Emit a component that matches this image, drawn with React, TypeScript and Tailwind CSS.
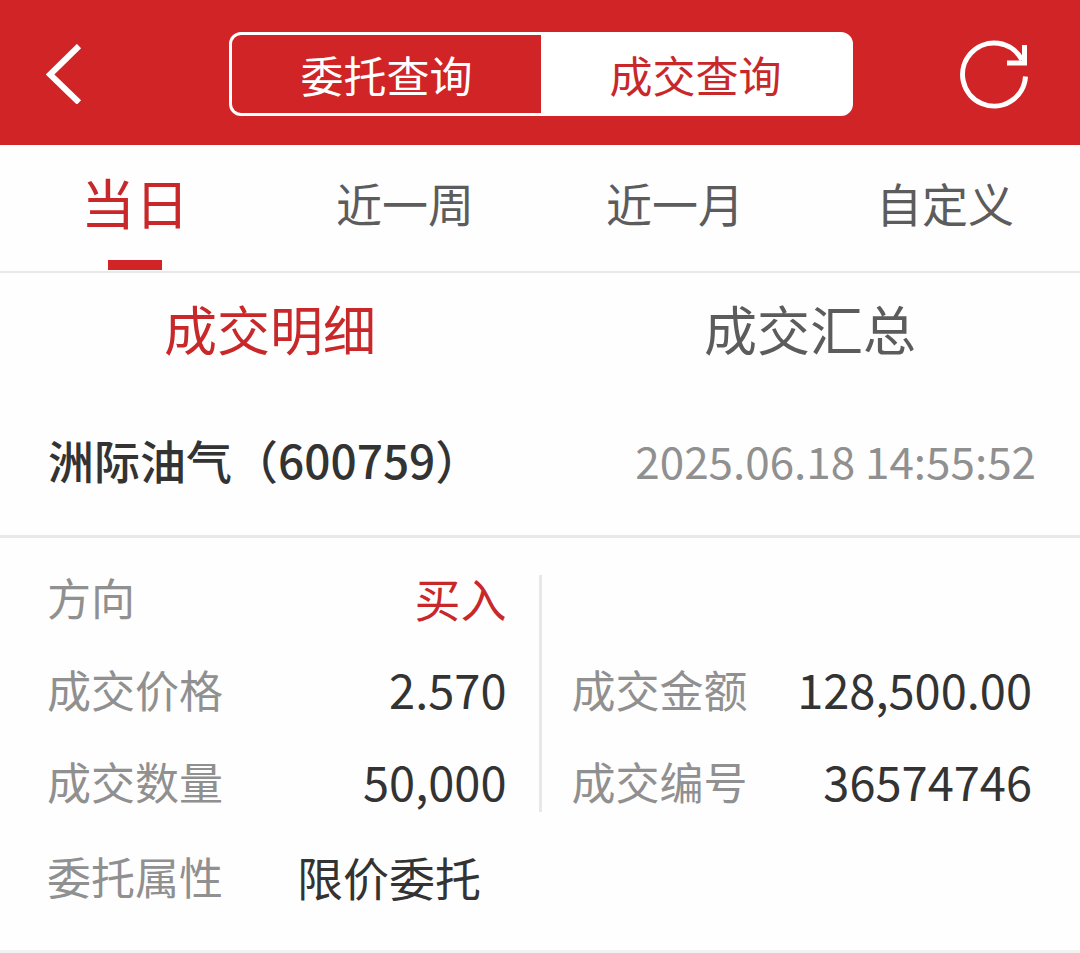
import { useState } from "react";
import clsx from "clsx";

const QUERY_MODES = ["委托查询", "成交查询"];
const RANGES = ["当日", "近一周", "近一月", "自定义"];
const VIEWS = ["成交明细", "成交汇总"];

const deal = {
  name: "洲际油气",
  code: "600759",
  time: "2025.06.18 14:55:52",
  side: "买入",
  price: "2.570",
  volume: "50,000",
  amount: "128,500.00",
  dealNo: "36574746",
  orderType: "限价委托",
};

function BackIcon() {
  return (
    <svg width="36" height="60" viewBox="0 0 36 60" fill="none" aria-hidden="true">
      <path d="M33 2 L4 30.5 L33 58.5" stroke="white" strokeWidth="6" />
    </svg>
  );
}

function RefreshIcon() {
  return (
    <svg width="70" height="70" viewBox="0 0 70 70" fill="none" stroke="white" strokeWidth="5" aria-hidden="true">
      <path d="M65.5 37.5 A31.5 31.5 0 1 1 62 21" />
      <path d="M64.5 6 V24 H47" />
    </svg>
  );
}

type FieldProps = {
  label: string;
  value: string;
  highlight?: boolean;
};

function Field({ label, value, highlight }: FieldProps) {
  return (
    <div className="flex h-11 items-center justify-between">
      <dt className="text-[44px] leading-11 text-[#909090]">{label}</dt>
      <dd
        className={clsx(
          "leading-11",
          highlight ? "text-[46px] text-[#c8282a]" : "text-[47px] text-[#333333]"
        )}
      >
        {value}
      </dd>
    </div>
  );
}

export default function App() {
  const [mode, setMode] = useState(1);
  const [range, setRange] = useState(0);
  const [view, setView] = useState(0);

  return (
    <div className="w-full bg-[#fefefe] font-['Noto_Sans_CJK_SC',sans-serif] whitespace-nowrap">
      <header className="flex h-[145px] items-center bg-[#d12426] pt-[3px] pr-[50px] pl-[46px]">
        <button type="button" aria-label="返回" className="flex w-[76px]">
          <BackIcon />
        </button>
        <div className="mx-[107px] grid h-[84px] flex-1 grid-cols-2 overflow-hidden rounded-xl border-3 border-white bg-white">
          {QUERY_MODES.map((label, i) => (
            <button
              key={label}
              type="button"
              aria-pressed={mode === i}
              onClick={() => setMode(i)}
              className={clsx(
                "text-[43px] leading-[78px]",
                mode === i ? "text-[#c8282a]" : "bg-[#d12426] text-white"
              )}
            >
              {label}
            </button>
          ))}
        </div>
        <button type="button" aria-label="刷新" className="flex">
          <RefreshIcon />
        </button>
      </header>

      <nav className="grid h-32 grid-cols-4 border-b-2 border-[#e8e8e8]">
        {RANGES.map((label, i) => (
          <button
            key={label}
            type="button"
            aria-pressed={range === i}
            onClick={() => setRange(i)}
            className={clsx(
              "flex flex-col items-center justify-between pt-4",
              range === i ? "text-[54px] text-[#c8282a]" : "text-[46px] text-[#5c5c5c]"
            )}
          >
            <span className="leading-[82px]">{label}</span>
            {range === i && <span className="mb-px h-[10px] w-[54px] bg-[#d12426]" />}
          </button>
        ))}
      </nav>

      <div className="grid h-[117px] grid-cols-2">
        {VIEWS.map((label, i) => (
          <button
            key={label}
            type="button"
            aria-pressed={view === i}
            onClick={() => setView(i)}
            className={clsx(
              "pb-1.5 text-[53px]",
              view === i ? "text-[#c8282a]" : "text-[#5c5c5c]"
            )}
          >
            {label}
          </button>
        ))}
      </div>

      <section>
        <div className="flex h-[148px] items-center justify-between border-b-3 border-[#e8e8e8] pr-11 pb-1.5 pl-12">
          <h2 className="text-[46px] font-medium text-[#333333]">
            {deal.name}（{deal.code}）
          </h2>
          <time className="text-[44px] text-[#909090]">{deal.time}</time>
        </div>

        <div className="grid grid-cols-[1fr_3px_1fr] pt-[37px]">
          <dl className="flex h-[237px] flex-col gap-12 pr-8 pl-[47px]">
            <Field label="方向" value={deal.side} highlight />
            <Field label="成交价格" value={deal.price} />
            <Field label="成交数量" value={deal.volume} />
          </dl>
          <div className="bg-[#e8e8e8]" />
          <dl className="flex h-[237px] flex-col gap-12 pt-[92px] pr-12 pl-[30px]">
            <Field label="成交金额" value={deal.amount} />
            <Field label="成交编号" value={deal.dealNo} />
          </dl>
        </div>

        <dl className="flex h-[141px] items-center gap-[74px] border-b-3 border-[#f2f2f2] pb-2.5 pl-[47px]">
          <dt className="text-[44px] text-[#909090]">委托属性</dt>
          <dd className="text-[46px] text-[#333333]">{deal.orderType}</dd>
        </dl>
      </section>
    </div>
  );
}
